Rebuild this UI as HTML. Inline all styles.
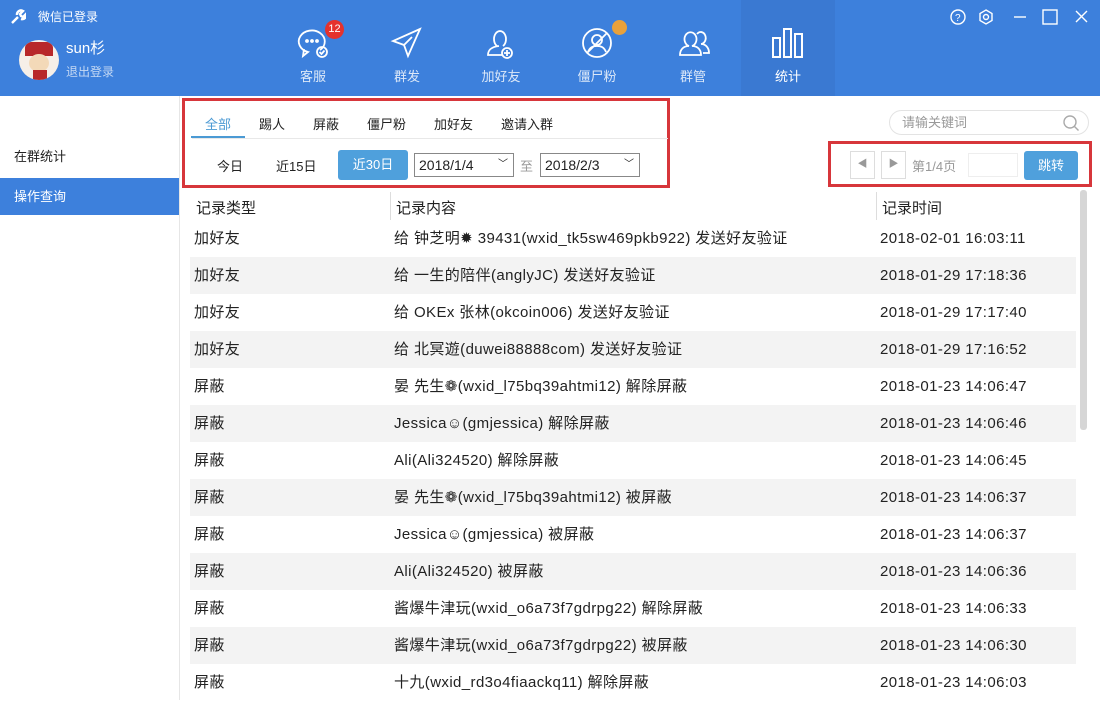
<!DOCTYPE html>
<html><head><meta charset="utf-8"><style>
*{margin:0;padding:0;box-sizing:border-box}
body{width:1100px;height:700px;overflow:hidden;background:#fff;font-family:"Liberation Sans","Noto Sans CJK SC",sans-serif;color:#222;position:relative}
.hdr{position:absolute;left:0;top:0;width:1100px;height:96px;background:#3d80dc}
.a{position:absolute}
.w{color:#fff}
.nav{position:absolute;top:0;width:94px;height:96px;text-align:center;color:#dce8f8;font-size:13px}
.nav svg{position:absolute;left:30px;top:26px}
.nav span{position:absolute;left:0;right:0;top:66px}
.side{position:absolute;left:0;top:96px;width:180px;height:604px;background:#fff;border-right:1px solid #e6e6e6}
.tab{position:absolute;top:114px;font-size:13px}
.row{position:absolute;left:190px;width:886px;height:37px;font-size:15px;letter-spacing:0.4px;line-height:37px}
.row.g{background:#f3f3f3}
.row span{position:absolute}
</style></head><body>
<div class="hdr"></div>
<svg class="a" style="left:10px;top:9px" width="16" height="16" viewBox="0 0 16 16"><path d="M2 14 L8 8 M7 6 a4 4 0 0 1 6-4 l-3 3 1 2 2 1 3-3 a4 4 0 0 1-5 5" stroke="#fff" stroke-width="2.4" fill="none"/></svg>
<div class="a w" style="left:38px;top:8px;font-size:12px">微信已登录</div>
<div class="a" style="left:19px;top:40px;width:40px;height:40px;border-radius:50%;background:#f6efe8;overflow:hidden"><div style="position:absolute;left:6px;top:2px;width:28px;height:14px;background:#b8282a;border-radius:6px 6px 0 0"></div><div style="position:absolute;left:10px;top:14px;width:20px;height:18px;background:#f3d9b8;border-radius:50%"></div><div style="position:absolute;left:14px;top:30px;width:14px;height:12px;background:#b8282a"></div></div>
<div class="a w" style="left:66px;top:37px;font-size:15px">sun杉</div>
<div class="a" style="left:66px;top:63px;font-size:12px;color:#c5d9f4">退出登录</div>

<div class="nav" style="left:266px"><svg width="34" height="34" viewBox="0 0 34 34" fill="none" stroke="#fff" stroke-width="1.8"><path d="M24 24 a13 11 0 1 0 -12 2 l-5 4 1-7"/><circle cx="11" cy="15" r="1" fill="#fff"/><circle cx="16" cy="15" r="1" fill="#fff"/><circle cx="21" cy="15" r="1" fill="#fff"/><circle cx="26" cy="26" r="5"/><path d="M23.5 26l2 2 3-3.5"/></svg><span>客服</span></div>
<div class="a" style="left:325px;top:20px;width:19px;height:19px;border-radius:50%;background:#e5322d;color:#fff;font-size:11px;text-align:center;line-height:19px">12</div>
<div class="nav" style="left:360px"><svg width="34" height="34" viewBox="0 0 34 34" fill="none" stroke="#fff" stroke-width="1.8"><path d="M30 3 L3 15 L14 19 L18 30 Z M14 19 L22 11"/></svg><span>群发</span></div>
<div class="nav" style="left:454px"><svg width="34" height="34" viewBox="0 0 34 34" fill="none" stroke="#fff" stroke-width="1.8"><path d="M13 20 a6 8 0 1 1 6 0 M15 20 c-8 1 -11 4 -11 9 h14"/><circle cx="23" cy="27" r="5"/><path d="M23 24v6M20 27h6"/></svg><span>加好友</span></div>
<div class="nav" style="left:550px"><svg width="34" height="34" viewBox="0 0 34 34" fill="none" stroke="#fff" stroke-width="1.8"><circle cx="17" cy="17" r="14"/><circle cx="17" cy="14" r="5"/><path d="M8 26c2-5 5-6 9-6s7 1 9 6M7 27L27 7"/></svg><span>僵尸粉</span></div>
<div class="a" style="left:612px;top:20px;width:15px;height:15px;border-radius:50%;background:#e9a13b"></div>
<div class="nav" style="left:646px"><svg width="36" height="34" viewBox="0 0 36 34" fill="none" stroke="#fff" stroke-width="1.8"><path d="M4 29c0-6 4-9 9-9a6 7 0 1 1 3 0c5 0 9 3 9 9z"/><path d="M21 8a5 6 0 1 1 4 10c4 0 8 3 8 9h-6"/></svg><span>群管</span></div>
<div class="a" style="left:741px;top:0;width:94px;height:96px;background:#3a79d2"></div>
<div class="nav" style="left:741px;color:#fff"><svg width="34" height="34" viewBox="0 0 34 34" fill="none" stroke="#fff" stroke-width="2"><rect x="2" y="12" width="7" height="19"/><rect x="13" y="3" width="7" height="28"/><rect x="24" y="8" width="7" height="23"/></svg><span>统计</span></div>

<svg class="a" style="left:950px;top:8px" width="140" height="18" viewBox="0 0 140 18" fill="none" stroke="#fff" stroke-width="1.4"><circle cx="8" cy="9" r="7"/><text x="5" y="13" font-size="10" fill="#fff" stroke="none">?</text><path d="M36 2l6 3.5v7l-6 3.5-6-3.5v-7z"/><circle cx="36" cy="9" r="2.5"/><path d="M64 9h12"/><rect x="93" y="2" width="14" height="14"/><path d="M126 3l11 11M137 3l-11 11"/></svg>

<div class="side"></div>
<div class="a" style="left:14px;top:146px;font-size:13px">在群统计</div>
<div class="a" style="left:0;top:178px;width:179px;height:37px;background:#3d80dc;color:#fff;font-size:13px;line-height:37px;padding-left:14px">操作查询</div>

<div class="a" style="left:182px;top:98px;width:488px;height:90px;border:3px solid #d7363b"></div>
<div class="a" style="left:192px;top:138px;width:476px;height:1px;background:#e8e8e8"></div>
<div class="tab" style="left:205px;color:#4b9ad4">全部</div>
<div class="a" style="left:191px;top:136px;width:54px;height:2px;background:#4b9ad4"></div>
<div class="tab" style="left:259px">踢人</div>
<div class="tab" style="left:313px">屏蔽</div>
<div class="tab" style="left:367px">僵尸粉</div>
<div class="tab" style="left:434px">加好友</div>
<div class="tab" style="left:501px">邀请入群</div>
<div class="a" style="left:217px;top:156px;font-size:13px">今日</div>
<div class="a" style="left:276px;top:156px;font-size:13px">近15日</div>
<div class="a" style="left:338px;top:150px;width:70px;height:30px;background:#4fa0dc;border-radius:3px;color:#fff;font-size:13px;text-align:center;line-height:30px">近30日</div>
<div class="a" style="left:414px;top:153px;width:100px;height:24px;border:1px solid #888;font-size:14px;line-height:22px;padding-left:4px">2018/1/4<span style="position:absolute;right:5px;top:0;font-size:10px">﹀</span></div>
<div class="a" style="left:520px;top:156px;font-size:13px;color:#999">至</div>
<div class="a" style="left:540px;top:153px;width:100px;height:24px;border:1px solid #888;font-size:14px;line-height:22px;padding-left:4px">2018/2/3<span style="position:absolute;right:5px;top:0;font-size:10px">﹀</span></div>

<div class="a" style="left:889px;top:110px;width:200px;height:25px;border:1px solid #e3e3e3;border-radius:13px;font-size:13px;color:#999;line-height:23px;padding-left:12px">请输关键词</div>
<svg class="a" style="left:1062px;top:114px" width="18" height="18" fill="none" stroke="#aaa" stroke-width="1.4"><circle cx="8" cy="8" r="6"/><path d="M12.5 12.5l4 4"/></svg>

<div class="a" style="left:828px;top:141px;width:264px;height:46px;border:3px solid #d7363b"></div>
<div class="a" style="left:850px;top:151px;width:25px;height:28px;border:1px solid #ddd;color:#999;font-size:10px;text-align:center;line-height:26px">◀</div>
<div class="a" style="left:881px;top:151px;width:25px;height:28px;border:1px solid #ddd;color:#999;font-size:10px;text-align:center;line-height:26px">▶</div>
<div class="a" style="left:912px;top:156px;font-size:13px;color:#999">第1/4页</div>
<div class="a" style="left:968px;top:153px;width:50px;height:24px;border:1px solid #eee"></div>
<div class="a" style="left:1024px;top:151px;width:54px;height:29px;background:#4fa0dc;border-radius:3px;color:#fff;font-size:13px;text-align:center;line-height:29px">跳转</div>

<div class="a" style="left:196px;top:197px;font-size:15px">记录类型</div>
<div class="a" style="left:390px;top:192px;width:1px;height:28px;background:#ddd"></div>
<div class="a" style="left:396px;top:197px;font-size:15px">记录内容</div>
<div class="a" style="left:876px;top:192px;width:1px;height:28px;background:#ddd"></div>
<div class="a" style="left:882px;top:197px;font-size:15px">记录时间</div>
<div class="a" style="left:1080px;top:190px;width:7px;height:240px;background:#d6d6d6;border-radius:3px"></div>

<div class="row" style="top:220px"><span style="left:4px">加好友</span><span style="left:204px">给 钟芝明✹ 39431(wxid_tk5sw469pkb922) 发送好友验证</span><span style="left:690px">2018-02-01 16:03:11</span></div>
<div class="row g" style="top:257px"><span style="left:4px">加好友</span><span style="left:204px">给 一生的陪伴(anglyJC) 发送好友验证</span><span style="left:690px">2018-01-29 17:18:36</span></div>
<div class="row" style="top:294px"><span style="left:4px">加好友</span><span style="left:204px">给 OKEx  张林(okcoin006) 发送好友验证</span><span style="left:690px">2018-01-29 17:17:40</span></div>
<div class="row g" style="top:331px"><span style="left:4px">加好友</span><span style="left:204px">给 北冥遊(duwei88888com) 发送好友验证</span><span style="left:690px">2018-01-29 17:16:52</span></div>
<div class="row" style="top:368px"><span style="left:4px">屏蔽</span><span style="left:204px">晏  先生❁(wxid_l75bq39ahtmi12) 解除屏蔽</span><span style="left:690px">2018-01-23 14:06:47</span></div>
<div class="row g" style="top:405px"><span style="left:4px">屏蔽</span><span style="left:204px">Jessica☺(gmjessica) 解除屏蔽</span><span style="left:690px">2018-01-23 14:06:46</span></div>
<div class="row" style="top:442px"><span style="left:4px">屏蔽</span><span style="left:204px">Ali(Ali324520) 解除屏蔽</span><span style="left:690px">2018-01-23 14:06:45</span></div>
<div class="row g" style="top:479px"><span style="left:4px">屏蔽</span><span style="left:204px">晏  先生❁(wxid_l75bq39ahtmi12) 被屏蔽</span><span style="left:690px">2018-01-23 14:06:37</span></div>
<div class="row" style="top:516px"><span style="left:4px">屏蔽</span><span style="left:204px">Jessica☺(gmjessica) 被屏蔽</span><span style="left:690px">2018-01-23 14:06:37</span></div>
<div class="row g" style="top:553px"><span style="left:4px">屏蔽</span><span style="left:204px">Ali(Ali324520) 被屏蔽</span><span style="left:690px">2018-01-23 14:06:36</span></div>
<div class="row" style="top:590px"><span style="left:4px">屏蔽</span><span style="left:204px">酱爆牛津玩(wxid_o6a73f7gdrpg22) 解除屏蔽</span><span style="left:690px">2018-01-23 14:06:33</span></div>
<div class="row g" style="top:627px"><span style="left:4px">屏蔽</span><span style="left:204px">酱爆牛津玩(wxid_o6a73f7gdrpg22) 被屏蔽</span><span style="left:690px">2018-01-23 14:06:30</span></div>
<div class="row" style="top:664px"><span style="left:4px">屏蔽</span><span style="left:204px">十九(wxid_rd3o4fiaackq11) 解除屏蔽</span><span style="left:690px">2018-01-23 14:06:03</span></div>
</body></html>
